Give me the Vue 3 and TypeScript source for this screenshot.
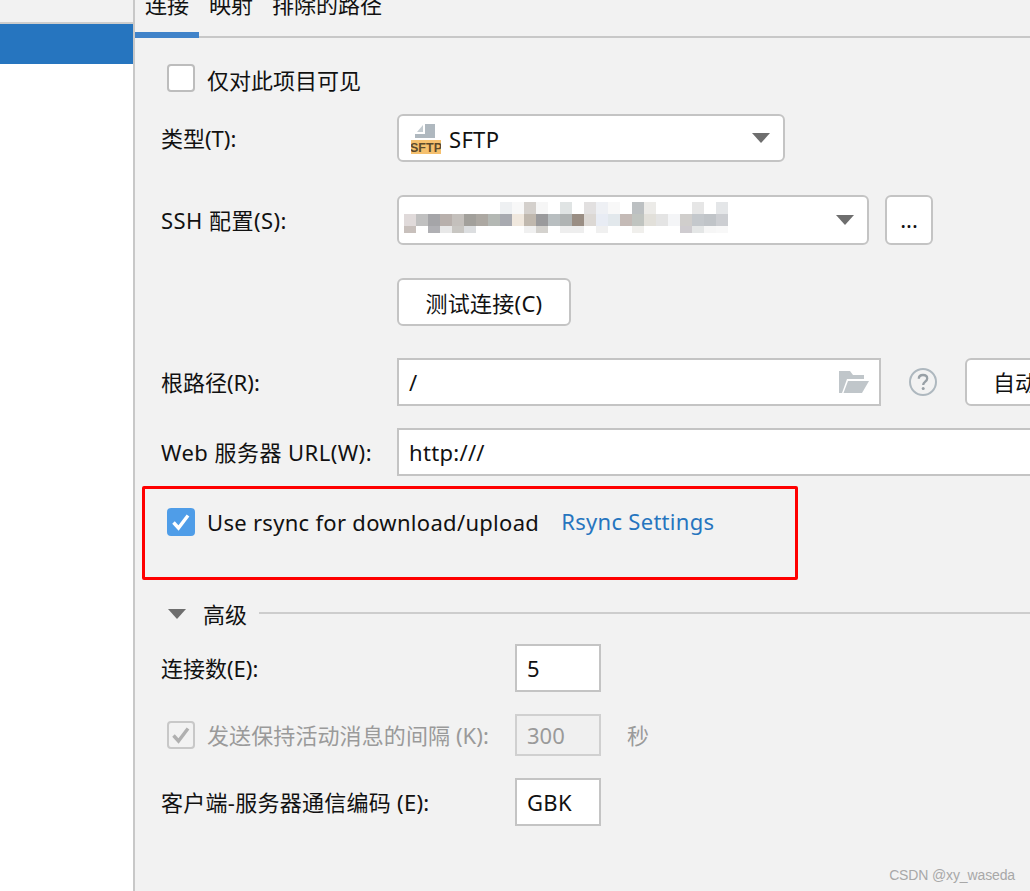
<script setup lang="ts">
const W = '#ffffff'

// mosaic over the blurred ssh host name
const blurRows: { height: number; cells: string[] }[] = [
  {
    height: 12,
    cells: [W, W, W, W, W, W, W, W, '#eef0f2', '#f8f8f8', '#d4d0cc', '#f6f6f6', W, '#e0e4e4', W, '#e2e0e0', '#eef0f4', '#f8f8f8', W, '#bcc0c2', '#ecebe8', W, W, W, '#e6e6e6', W, '#e4e6e8'],
  },
  {
    height: 12,
    cells: ['#e0dada', '#c0c0c0', '#a5a5a8', '#b8b0ac', '#c4c0bc', '#a2a09b', '#aca8a2', '#b4b8b4', '#a8aab0', '#f0e8de', '#c0b8ae', '#9a9a9c', '#b8bec0', '#b0b4b4', '#9a8e84', '#dcd8d4', '#e8ecf4', '#e2e8ec', '#c4bab6', '#c0c4c0', '#e2e0da', '#e4e4e4', '#f4f5f7', '#d0cecc', '#c4c8cc', '#c0c4c8', '#ccced2'],
  },
  {
    height: 7,
    cells: ['#c8c0bc', W, '#b0b0b4', '#e8e8e8', '#c8c6c2', '#dcdee0', W, W, W, W, '#f0f0f0', '#d4d2ce', W, '#eeeeee', '#eeeeee', W, '#f0f0f0', W, W, '#f0efec', W, W, W, '#cfccd0', '#e4e6e6', '#f6f6f6', '#f8f8f8'],
  },
]
</script>

<template>
  <div class="page">
    <aside class="sidebar">
      <div class="sidebar__head"></div>
      <div class="sidebar__selected"></div>
    </aside>

    <main class="panel">
      <nav class="tabs">
        <span class="tab tab--active">连接</span>
        <span class="tab">映射</span>
        <span class="tab">排除的路径</span>
      </nav>

      <div class="form">
        <label class="row row--check row--visible">
          <span class="check"></span>
          <span class="visible__text">仅对此项目可见</span>
        </label>

        <div class="row row--type">
          <span class="label">类型(T):</span>
          <div class="box select select--type">
            <svg class="sftp-icon" width="30" height="30" viewBox="0 0 30 30">
              <path d="M14 0H24V14H4V10H14Z" fill="#afb8bf" />
              <path d="M6 8L12 1V8Z" fill="#c3cbd0" />
              <rect y="16" width="30" height="14" fill="#f5c06e" />
              <text x="15" y="27.5" class="sftp-icon__text" text-anchor="middle">SFTP</text>
            </svg>
            <span class="latin type__text">SFTP</span>
            <i class="arrow select__arrow"></i>
          </div>
        </div>

        <div class="row row--ssh">
          <span class="label label--ssh">SSH 配置(S):</span>
          <div class="box select select--ssh">
            <div class="blur">
              <div
                v-for="(r, i) in blurRows"
                :key="i"
                class="blur__row"
                :style="{ height: r.height + 'px' }"
              >
                <span
                  v-for="(c, j) in r.cells"
                  :key="j"
                  class="blur__cell"
                  :style="{ background: c }"
                ></span>
              </div>
            </div>
            <i class="arrow select__arrow"></i>
          </div>
          <div class="box btn btn--more">...</div>
        </div>

        <div class="row row--test">
          <div class="box btn btn--test">测试连接(C)</div>
        </div>

        <div class="row row--root">
          <span class="label">根路径(R):</span>
          <div class="input input--root">
            <span>/</span>
            <svg class="folder" width="30" height="22" viewBox="0 0 30 22">
              <path d="M0 22V0H11L14 4H25V8H8L3 22Z" fill="#c0c6ca" />
              <path d="M9 10H30L23 22H4.500Z" fill="#c0c6ca" />
            </svg>
          </div>
          <svg class="help" width="30" height="30" viewBox="0 0 30 30">
            <circle cx="15" cy="15" r="13" fill="none" stroke="#aeb8bf" stroke-width="2" />
            <path d="M10.800 11.800C10.800 9.300 12.600 8 15 8C17.500 8 19.200 9.400 19.200 11.500C19.200 14.500 15.200 14.800 15.200 18" fill="none" stroke="#98a0a6" stroke-width="2.300" />
            <circle cx="15.200" cy="21.500" r="1.500" fill="#98a0a6" />
          </svg>
          <div class="box btn btn--auto">自动检测</div>
        </div>

        <div class="row row--web">
          <span class="label label--web">Web 服务器 URL(W):</span>
          <div class="input input--web latin">http:///</div>
        </div>

        <label class="row row--check row--rsync">
          <span class="check check--on">
            <svg width="20" height="20" viewBox="0 0 20 20">
              <path d="M2.500 10.500L7.500 16L17 3.500" fill="none" stroke="#fff" stroke-width="3.400" />
            </svg>
          </span>
          <span class="latin">Use rsync for download/upload</span>
          <a class="link latin">Rsync Settings</a>
        </label>

        <div class="row row--advanced">
          <i class="arrow"></i>
          <span class="advanced__title">高级</span>
          <span class="advanced__line"></span>
        </div>

        <div class="row row--conn">
          <span class="label label--wide">连接数(E):</span>
          <div class="input input--small">5</div>
        </div>

        <div class="row row--keep is-disabled">
          <span class="check check--disabled">
            <svg width="20" height="20" viewBox="0 0 20 20">
              <path d="M2.500 10.500L7.500 16L17 3.500" fill="none" stroke="#b0b0b0" stroke-width="3.400" />
            </svg>
          </span>
          <span class="keep__label">发送保持活动消息的间隔 (K):</span>
          <div class="input input--small input--disabled">300</div>
          <span class="keep__unit">秒</span>
        </div>

        <div class="row row--charset">
          <span class="label label--wide label--charset">客户端-服务器通信编码 (E):</span>
          <div class="input input--small latin">GBK</div>
        </div>
      </div>

      <div class="watermark">CSDN @xy_waseda</div>
      <div class="annotation"></div>
    </main>
  </div>
</template>

<style>
html,
body {
  margin: 0;
  background: #f2f2f2;
}
</style>

<style scoped>
.page {
  display: flex;
  width: 1030px;
  height: 891px;
  overflow: hidden;
  font-family: 'Noto Sans', 'Noto Sans CJK SC', sans-serif;
  font-size: 22px;
  line-height: 28px;
  color: #111;
  background: #f2f2f2;
}

.latin {
  letter-spacing: 0.3px;
}

.sidebar {
  flex: none;
  width: 133px;
  background: #fff;
  border-right: 2px solid #c8c8c8;
}

.sidebar__head {
  height: 22px;
  background: #f2f2f2;
  border-bottom: 2px solid #cdcdcd;
}

.sidebar__selected {
  height: 40px;
  background: #2675bf;
}

.panel {
  position: relative;
  flex: 1;
  min-width: 0;
  overflow: hidden;
}

.tabs {
  display: flex;
  height: 38px;
  box-sizing: border-box;
  border-bottom: 2px solid #c8c8c8;
}

.tab {
  height: 36px;
  padding: 0 9px 0 10px;
  line-height: 8px;
  box-sizing: border-box;
  white-space: nowrap;
}

.tab--active {
  box-shadow: inset 0 -4px 0 #4083c9, 0 2px 0 #4083c9;
  padding: 0 10px;
  width: 64px;
}

.form {
  display: flex;
  flex-direction: column;
  padding-left: 26px;
}

.row {
  display: flex;
  align-items: center;
  flex: none;
  white-space: nowrap;
}

.row--visible {
  margin-top: 26px;
  height: 28px;
}
.row--type {
  margin-top: 22px;
}
.row--ssh {
  margin-top: 33px;
}
.row--test {
  margin-top: 33px;
  padding-left: 236px;
}
.row--root {
  margin-top: 32px;
}
.row--web {
  margin-top: 22px;
}
.row--rsync {
  margin-top: 32px;
}
.row--advanced {
  margin-top: 68px;
  height: 20px;
  padding-left: 7px;
}
.row--conn {
  margin-top: 20px;
}
.row--keep {
  margin-top: 22px;
  padding-left: 6px;
}
.row--charset {
  margin-top: 22px;
}

.row--check {
  padding-left: 6px;
  gap: 12px;
}

.visible__text {
  align-self: flex-start;
  padding-top: 2px;
}

.type__text {
  padding-top: 1px;
}

.label {
  flex: none;
  width: 236px;
}

.label--ssh {
  letter-spacing: 0.45px;
}

.label--web {
  letter-spacing: 0.45px;
}

.label--charset {
  letter-spacing: 0.27px;
}

.label--wide {
  width: 354px;
}

.check {
  flex: none;
  display: flex;
  align-items: center;
  justify-content: center;
  width: 28px;
  height: 28px;
  box-sizing: border-box;
  background: #fff;
  border: 2px solid #bdbdbd;
  border-radius: 4px;
}

.check--on {
  background: #4f9de8;
  border-color: #4f9de8;
}

.check--disabled {
  background: #f2f2f2;
  border-color: #c8c8c8;
}

.box {
  box-sizing: border-box;
  background: #fff;
  border: 2px solid #c4c4c4;
  border-radius: 6px;
}

.select {
  position: relative;
  display: flex;
  align-items: center;
}

.select--type {
  width: 388px;
  height: 48px;
  padding-left: 12px;
  gap: 8px;
}

.select--ssh {
  width: 472px;
  height: 50px;
  padding-left: 5px;
}

.select__arrow {
  margin-left: auto;
  margin-right: 13px;
}

.arrow {
  flex: none;
  width: 0;
  height: 0;
  border-left: 9px solid transparent;
  border-right: 9px solid transparent;
  border-top: 10px solid #6e6e6e;
}

.sftp-icon {
  flex: none;
  margin-top: 2px;
}

.sftp-icon__text {
  font-family: 'Liberation Sans', sans-serif;
  font-size: 12.5px;
  font-weight: 700;
  fill: #5c4a2c;
}

.blur {
  flex: none;
  margin-bottom: 5px;
}

.blur__row {
  display: flex;
}

.blur__cell {
  flex: none;
  width: 12px;
}

.btn {
  display: flex;
  align-items: center;
  justify-content: center;
}

.btn--more {
  width: 48px;
  height: 50px;
  margin-left: 16px;
  padding-bottom: 2px;
}

.btn--test {
  width: 174px;
  height: 48px;
  padding-top: 1px;
  letter-spacing: 0.25px;
}

.btn--auto {
  flex: none;
  width: 130px;
  height: 48px;
  margin-left: 27px;
  padding-left: 26px;
  justify-content: flex-start;
}

.input {
  display: flex;
  align-items: center;
  flex: none;
  box-sizing: border-box;
  background: #fff;
  border: 2px solid #c4c4c4;
  padding-left: 10px;
}

.input--root {
  width: 484px;
  height: 48px;
}

.input--web {
  width: 700px;
  height: 48px;
}

.input--small {
  width: 86px;
  height: 48px;
}

.input--disabled {
  height: 42px;
  background: #f0f0f0;
  border-color: #d0d0d0;
  color: #9a9a9a;
}

.folder {
  margin-left: auto;
  margin-right: 10px;
}

.help {
  flex: none;
  margin-left: 27px;
}

.link {
  margin-left: 10px;
  margin-top: -3px;
  color: #2675bf;
}

.row--rsync {
  gap: 12px;
}

.advanced__title {
  margin-left: 17px;
  margin-top: -1px;
}

.advanced__line {
  flex: 1;
  height: 2px;
  margin-left: 12px;
  margin-top: -2px;
  background: #cdcdcd;
}

.is-disabled {
  color: #9a9a9a;
}

.keep__label {
  flex: none;
  width: 320px;
  padding-left: 12px;
  box-sizing: border-box;
  letter-spacing: 0.1px;
}

.keep__unit {
  margin-left: 26px;
}

.watermark {
  position: absolute;
  right: 15px;
  bottom: 8px;
  font-family: 'Liberation Sans', sans-serif;
  font-size: 14px;
  line-height: 16px;
  letter-spacing: -0.13px;
  color: #a8a8a8;
}

.annotation {
  position: absolute;
  left: 7px;
  top: 486px;
  width: 656px;
  height: 94px;
  box-sizing: border-box;
  border: 3px solid #f00;
  border-radius: 2px;
  pointer-events: none;
}
</style>
